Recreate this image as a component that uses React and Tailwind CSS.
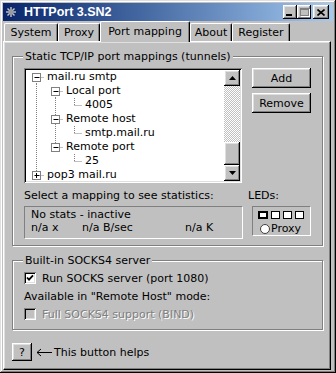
import React from "react";

/* ---------- win98 bevels ---------- */
const raised =
  "bg-[#c0c0c0] shadow-[inset_-1px_-1px_#000,inset_1px_1px_#fff,inset_-2px_-2px_#808080,inset_2px_2px_#dfdfdf]";
const sunken =
  "shadow-[inset_1px_1px_#808080,inset_-1px_-1px_#fff,inset_2px_2px_#000,inset_-2px_-2px_#dfdfdf]";
const etched =
  "border border-[#808080] shadow-[1px_1px_0_#fff,inset_1px_1px_0_#fff]";
const staticEdge =
  "border-t border-l border-t-[#808080] border-l-[#808080] border-r border-b border-r-white border-b-white";

const treeRows = [
  { label: "mail.ru smtp", guides: [], own: "down", box: "minus" },
  { label: "Local port", guides: [true], own: "down", box: "minus" },
  { label: "4005", guides: [true, true], own: "up" },
  { label: "Remote host", guides: [true], own: "full", box: "minus" },
  { label: "smtp.mail.ru", guides: [true, true], own: "up" },
  { label: "Remote port", guides: [true], own: "up", box: "minus" },
  { label: "25", guides: [true, false], own: "up" },
  { label: "pop3 mail.ru", guides: [], own: "up", box: "plus" },
];

const TreeRow = ({ label, guides, own, box }) => {
  const level = guides.length;
  const cx = 10.5 + 19 * level;
  const dot = { stroke: "#808080", strokeDasharray: "1 1" };
  const y1 = own === "down" ? 7 : 0;
  const y2 = own === "up" ? 8 : 14;

  return (
    <div className="flex h-[14px] items-center whitespace-nowrap">
      <svg width={21 + 19 * level} height="14" className="shrink-0">
        {guides.map(
          (g, i) =>
            g && (
              <line key={i} x1={10.5 + 19 * i} y1="0" x2={10.5 + 19 * i} y2="14" {...dot} />
            )
        )}
        <line x1={cx} y1={y1} x2={cx} y2={y2} {...dot} />
        <line x1={cx} y1="7.5" x2={cx + 8} y2="7.5" {...dot} />
        {box && (
          <g>
            <rect x={cx - 4} y="3.5" width="8" height="8" fill="#fff" stroke="#808080" />
            <line x1={cx - 2} y1="7.5" x2={cx + 3} y2="7.5" stroke="#000" />
            {box === "plus" && <line x1={cx} y1="5" x2={cx} y2="10" stroke="#000" />}
          </g>
        )}
      </svg>
      <span className="leading-[14px]">{label}</span>
    </div>
  );
};

const Arrow = ({ up }) => (
  <svg width="7" height="4" viewBox="0 0 7 4">
    <path d={up ? "M3.5 0 L7 4 L0 4 Z" : "M0 0 L7 0 L3.5 4 Z"} fill="#000" />
  </svg>
);

const Tab = ({ label, w, active }) =>
  active ? (
    <div
      className={`${w} relative z-10 mb-[-1px] flex h-[21px] items-start justify-center rounded-t-[2px] border-t border-l border-t-white border-l-white border-r border-r-black bg-[#c0c0c0] pt-[3px] shadow-[inset_-1px_0_#808080]`}
    >
      {label}
    </div>
  ) : (
    <div
      className={`${w} flex h-[18px] items-start justify-center rounded-t-[2px] border-t border-l border-t-white border-l-white border-r border-r-black pt-[2px] shadow-[inset_-1px_0_#808080]`}
    >
      {label}
    </div>
  );

export default function App() {
  return (
    <div className="flex h-[373px] w-[336px] flex-col bg-[#c0c0c0] p-[3px] font-['DejaVu_Sans',sans-serif] text-[11px] leading-[13px] text-black shadow-[inset_-1px_-1px_#000,inset_1px_1px_#dfdfdf,inset_-2px_-2px_#808080,inset_2px_2px_#fff]">
      {/* Title bar */}
      <div className="flex h-[18px] shrink-0 items-center bg-gradient-to-r from-[#0a246a] to-[#a6caf0] pl-[2px] pr-[4px]">
        <svg width="12" height="12" viewBox="0 0 12 12" className="shrink-0">
          <g stroke="#c8c8c8" strokeWidth="1.4">
            <line x1="6" y1="1" x2="6" y2="11" />
            <line x1="1" y1="6" x2="11" y2="6" />
            <line x1="2.5" y1="2.5" x2="9.5" y2="9.5" />
            <line x1="9.5" y1="2.5" x2="2.5" y2="9.5" />
          </g>
          <circle cx="6" cy="6" r="2.2" fill="#9a9a9a" />
        </svg>
        <span className="ml-[7px] font-['Liberation_Sans',sans-serif] text-[12.5px] font-bold text-white">
          HTTPort 3.SN2
        </span>
        <div className="ml-auto flex items-center">
          <div className={`${raised} flex h-[14px] w-[14px] items-end pb-[3px] pl-[3px]`}>
            <div className="h-[2px] w-[6px] bg-black" />
          </div>
          <div className={`${raised} flex h-[14px] w-[14px] items-center justify-center`}>
            <div className="h-[8px] w-[9px] border border-t-2 border-[#808080] shadow-[1px_1px_0_#fff]" />
          </div>
          <div className={`${raised} ml-[2px] flex h-[14px] w-[16px] items-center justify-center`}>
            <svg width="8" height="7" viewBox="0 0 8 7">
              <path d="M0.5 0.5 L7.5 6.5 M7.5 0.5 L0.5 6.5" stroke="#000" strokeWidth="1.6" />
            </svg>
          </div>
        </div>
      </div>

      {/* Tabs */}
      <div className="ml-[1px] flex h-[20px] shrink-0 items-end">
        <Tab label="System" w="w-[54px]" />
        <Tab label="Proxy" w="w-[42px]" />
        <Tab label="Port mapping" w="w-[90px]" active />
        <Tab label="About" w="w-[42px]" />
        <Tab label="Register" w="w-[58px]" />
      </div>

      {/* Tab panel */}
      <div className="mr-[2px] flex flex-1 flex-col border-t border-l border-t-white border-l-white border-r border-b border-r-black border-b-black pl-[8px] shadow-[inset_-1px_-1px_#808080,inset_1px_1px_#dfdfdf]">
        {/* Static mappings group */}
        <fieldset className={`${etched} mt-[8px] w-[311px]`}>
          <legend className="ml-[10px] bg-[#c0c0c0] px-[2px] leading-[13px]">
            Static TCP/IP port mappings (tunnels)
          </legend>
          <div className="pb-[6px] pl-[11px] pt-[5px]">
            <div className="flex items-start">
              <div className={`${sunken} flex h-[115px] w-[218px] bg-white p-[2px]`}>
                <div className="flex-1 overflow-hidden">
                  {treeRows.map((r) => (
                    <TreeRow key={r.label} {...r} />
                  ))}
                </div>
                <div className="flex w-[16px] flex-col">
                  <div className={`${raised} flex h-[16px] items-center justify-center`}>
                    <Arrow up />
                  </div>
                  <div className="flex flex-1 flex-col justify-end bg-[repeating-conic-gradient(#c0c0c0_0%_25%,#fff_0%_50%)] bg-[length:2px_2px]">
                    <div className={`${raised} h-[23px]`} />
                  </div>
                  <div className={`${raised} flex h-[16px] items-center justify-center`}>
                    <Arrow />
                  </div>
                </div>
              </div>
              <div className="ml-[10px] flex flex-col gap-[5px]">
                <div className={`${raised} flex h-[20px] w-[59px] items-center justify-center`}>Add</div>
                <div className={`${raised} flex h-[20px] w-[59px] items-center justify-center`}>Remove</div>
              </div>
            </div>

            <div className="mt-[6px] flex">
              <span className="w-[224px]">Select a mapping to see statistics:</span>
              <span>LEDs:</span>
            </div>

            <div className="mt-[4px] flex items-start">
              <div className={`${staticEdge} h-[33px] w-[219px] pl-[6px] pt-[1px]`}>
                <div>No stats - inactive</div>
                <div className="flex">
                  <span className="w-[51px]">n/a x</span>
                  <span className="w-[103px]">n/a B/sec</span>
                  <span>n/a K</span>
                </div>
              </div>
              <div className={`${staticEdge} ml-[9px] h-[30px] w-[59px] pl-[5px] pt-[4px]`}>
                <div className="flex gap-[3px]">
                  <div className="h-[8px] w-[10px] border-2 border-black bg-white" />
                  <div className="h-[8px] w-[9px] border border-black bg-white" />
                  <div className="h-[8px] w-[9px] border border-black bg-white" />
                  <div className="h-[8px] w-[9px] border border-black bg-white" />
                </div>
                <div className="mt-[3px] flex items-center pl-[2px]">
                  <div className="h-[10px] w-[10px] rounded-full border border-[#404040] bg-white" />
                  <span className="ml-[1px]">Proxy</span>
                </div>
              </div>
            </div>
          </div>
        </fieldset>

        {/* SOCKS group */}
        <fieldset className={`${etched} mt-[8px] w-[311px]`}>
          <legend className="ml-[10px] bg-[#c0c0c0] px-[2px] leading-[13px]">
            Built-in SOCKS4 server
          </legend>
          <div className="pb-[9px] pl-[11px] pt-[5px]">
            <div className="flex h-[12px] items-center">
              <div className={`${sunken} flex h-[12px] w-[12px] items-center justify-center bg-white`}>
                <svg width="8" height="8" viewBox="0 0 8 8">
                  <path d="M1 3.5 L3 5.6 L7 1.3" stroke="#000" strokeWidth="1.8" fill="none" />
                </svg>
              </div>
              <span className="ml-[6px]">Run SOCKS server (port 1080)</span>
            </div>
            <div className="mt-[6px]">Available in "Remote Host" mode:</div>
            <div className="mt-[5px] flex h-[12px] items-center">
              <div className={`${sunken} h-[12px] w-[12px] bg-[#c0c0c0]`} />
              <span className="ml-[6px] text-[#808080] [text-shadow:1px_1px_0_#fff]">
                Full SOCKS4 support (BIND)
              </span>
            </div>
          </div>
        </fieldset>

        {/* Help */}
        <div className="mt-[13px] flex items-center">
          <div className={`${raised} flex h-[18px] w-[20px] items-center justify-center`}>?</div>
          <svg width="16" height="9" viewBox="0 0 16 9" className="ml-[4px]">
            <path d="M1 4.5 H16 M1 4.5 L5 1 M1 4.5 L5 8" stroke="#000" fill="none" />
          </svg>
          <span className="ml-[2px]">This button helps</span>
        </div>
      </div>
    </div>
  );
}
